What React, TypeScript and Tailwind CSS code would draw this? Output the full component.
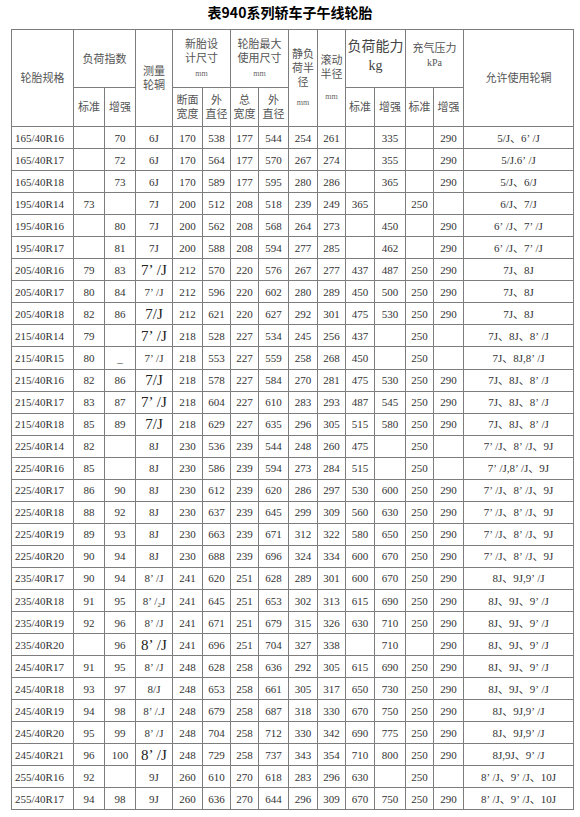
import React from "react";

type Row = {
  spec: string;
  liStd: string;
  liInc: string;
  rim: string;
  big?: boolean;
  secW: string;
  dia: string;
  maxW: string;
  maxD: string;
  staticR: string;
  rollR: string;
  loadStd: string;
  loadInc: string;
  pStd: string;
  pInc: string;
  rims: string;
};

const r = (
  spec: string,
  liStd: string,
  liInc: string,
  rim: string,
  big: boolean,
  secW: string,
  dia: string,
  maxW: string,
  maxD: string,
  staticR: string,
  rollR: string,
  loadStd: string,
  loadInc: string,
  pStd: string,
  pInc: string,
  rims: string
): Row => ({ spec, liStd, liInc, rim, big, secW, dia, maxW, maxD, staticR, rollR, loadStd, loadInc, pStd, pInc, rims });

const rows: Row[] = [
  r("165/40R16", "", "70", "6J", false, "170", "538", "177", "544", "254", "261", "", "335", "", "290", "5/J、6’/J"),
  r("165/40R17", "", "72", "6J", false, "170", "564", "177", "570", "267", "274", "", "355", "", "290", "5/J.6’/J"),
  r("165/40R18", "", "73", "6J", false, "170", "589", "177", "595", "280", "286", "", "365", "", "290", "5/J、6/J"),
  r("195/40R14", "73", "", "7J", false, "200", "512", "208", "518", "239", "249", "365", "", "250", "", "6/J、7/J"),
  r("195/40R16", "", "80", "7J", false, "200", "562", "208", "568", "264", "273", "", "450", "", "290", "6’/J、7’/J"),
  r("195/40R17", "", "81", "7J", false, "200", "588", "208", "594", "277", "285", "", "462", "", "290", "6’/J、7’/J"),
  r("205/40R16", "79", "83", "7’/J", true, "212", "570", "220", "576", "267", "277", "437", "487", "250", "290", "7J、8J"),
  r("205/40R17", "80", "84", "7’/J", false, "212", "596", "220", "602", "280", "289", "450", "500", "250", "290", "7J、8J"),
  r("205/40R18", "82", "86", "7/J", true, "212", "621", "220", "627", "292", "301", "475", "530", "250", "290", "7J、8J"),
  r("215/40R14", "79", "", "7’/J", true, "218", "528", "227", "534", "245", "256", "437", "", "250", "", "7J、8J、8’/J"),
  r("215/40R15", "80", "_", "7’/J", false, "218", "553", "227", "559", "258", "268", "450", "", "250", "", "7J、8J,8’/J"),
  r("215/40R16", "82", "86", "7/J", true, "218", "578", "227", "584", "270", "281", "475", "530", "250", "290", "7J、8J、8’/J"),
  r("215/40R17", "83", "87", "7’/J", true, "218", "604", "227", "610", "283", "293", "487", "545", "250", "290", "7J、8J、8’/J"),
  r("215/40R18", "85", "89", "7/J", true, "218", "629", "227", "635", "296", "305", "515", "580", "250", "290", "7J、8J、8’/J"),
  r("225/40R14", "82", "", "8J", false, "230", "536", "239", "544", "248", "260", "475", "", "250", "", "7’/J、8’/J、9J"),
  r("225/40R16", "85", "", "8J", false, "230", "586", "239", "594", "273", "284", "515", "", "250", "", "7’/J,8’/J、9J"),
  r("225/40R17", "86", "90", "8J", false, "230", "612", "239", "620", "286", "297", "530", "600", "250", "290", "7’/J、8’/J、9J"),
  r("225/40R18", "88", "92", "8J", false, "230", "637", "239", "645", "299", "309", "560", "630", "250", "290", "7’/J、8’/J、9J"),
  r("225/40R19", "89", "93", "8J", false, "230", "663", "239", "671", "312", "322", "580", "650", "250", "290", "7’/J、8’/J、9J"),
  r("225/40R20", "90", "94", "8J", false, "230", "688", "239", "696", "324", "334", "600", "670", "250", "290", "7’/J、8’/J、9J"),
  r("235/40R17", "90", "94", "8’/J", false, "241", "620", "251", "628", "289", "301", "600", "670", "250", "290", "8J、9J,9’/J"),
  r("235/40R18", "91", "95", "8’/₂J", false, "241", "645", "251", "653", "302", "313", "615", "690", "250", "290", "8J、9J、9’/J"),
  r("235/40R19", "92", "96", "8’/J", false, "241", "671", "251", "679", "315", "326", "630", "710", "250", "290", "8J、9J、9’/J"),
  r("235/40R20", "", "96", "8’/J", true, "241", "696", "251", "704", "327", "338", "", "710", "", "290", "8J、9J、9’/J"),
  r("245/40R17", "91", "95", "8’/J", false, "248", "628", "258", "636", "292", "305", "615", "690", "250", "290", "8J、9J、9’/J"),
  r("245/40R18", "93", "97", "8/J", false, "248", "653", "258", "661", "305", "317", "650", "730", "250", "290", "8J、9J、9’/J"),
  r("245/40R19", "94", "98", "8’/.J", false, "248", "679", "258", "687", "318", "330", "670", "750", "250", "290", "8J、9J,9’/J"),
  r("245/40R20", "95", "99", "8’/J", false, "248", "704", "258", "712", "330", "342", "690", "775", "250", "290", "8J、9J,9’/J"),
  r("245/40R21", "96", "100", "8’/J", true, "248", "729", "258", "737", "343", "354", "710", "800", "250", "290", "8J,9J、9’/J"),
  r("255/40R16", "92", "", "9J", false, "260", "610", "270", "618", "283", "296", "630", "", "250", "", "8’/J、9’/J、10J"),
  r("255/40R17", "94", "98", "9J", false, "260", "636", "270", "644", "296", "309", "670", "750", "250", "290", "8’/J、9’/J、10J"),
];

const widths = [62, 31, 31, 37, 30, 28, 28, 30, 29, 28, 29, 31, 28, 30, 110];

const th = "border border-[#7d7d7d] font-normal align-middle text-center p-0";
const td = "border border-[#7d7d7d] text-center p-0 h-[22.06px] text-[11px] leading-[14px]";
const mm = "block text-[8px] leading-[12px] text-[#666]";

// the prime mark in the source is a full-width quote, followed by a little space
function Rim({ text }: { text: string }) {
  const parts = text.split("’");
  return (
    <>
      {parts.map((p, i) => (
        <React.Fragment key={i}>
          {p}
          {i < parts.length - 1 && <span className="inline-block w-[0.55em] text-left">’</span>}
        </React.Fragment>
      ))}
    </>
  );
}

export default function App() {
  return (
    <div className="w-[580px] bg-white text-[#333] font-['Liberation_Serif','Noto_Sans_CJK_SC',serif]">
      <h1 className="pt-[3px] h-[29px] text-center text-[14px] leading-[18px] font-bold text-black font-['Noto_Sans_CJK_SC',sans-serif]">
        表940系列轿车子午线轮胎
      </h1>
      <div className="pl-[11px]">
        <table className="w-[562px] table-fixed border-collapse border border-[#555]">
          <colgroup>
            {widths.map((w, i) => (
              <col key={i} style={{ width: w }} />
            ))}
          </colgroup>
          <thead className="text-[11px] leading-[14px] text-[#555]">
            <tr className="h-[58px]">
              <th rowSpan={2} className={th}>轮胎规格</th>
              <th colSpan={2} className={th}>负荷指数</th>
              <th rowSpan={2} className={th}>
                测量
                <br />
                轮辋
              </th>
              <th colSpan={2} className={th}>
                新胎设
                <br />
                计尺寸
                <span className={mm + " mt-[3px]"}>mm</span>
              </th>
              <th colSpan={2} className={th}>
                轮胎最大
                <br />
                使用尺寸
                <span className={mm + " mt-[3px]"}>mm</span>
              </th>
              <th rowSpan={2} className={th}>
                静负
                <br />
                荷半
                <br />
                径<span className={mm + " mt-[8px]"}>mm</span>
              </th>
              <th rowSpan={2} className={th}>
                滚动
                <br />
                半径<span className={mm + " mt-[10px]"}>mm</span>
              </th>
              <th colSpan={2} className={th + " text-[14px] leading-[19px] pb-[6px] text-[#444]"}>
                负荷能力
                <br />
                kg
              </th>
              <th colSpan={2} className={th + " pb-[6px]"}>
                充气压力
                <br />
                <span className="text-[10px]">kPa</span>
              </th>
              <th rowSpan={2} className={th}>允许使用轮辋</th>
            </tr>
            <tr className="h-[39px]">
              <th className={th}>标准</th>
              <th className={th}>增强</th>
              <th className={th}>
                断面
                <br />
                宽度
              </th>
              <th className={th}>
                外
                <br />
                直径
              </th>
              <th className={th}>
                总
                <br />
                宽度
              </th>
              <th className={th}>
                外
                <br />
                直径
              </th>
              <th className={th}>标准</th>
              <th className={th}>增强</th>
              <th className={th}>标准</th>
              <th className={th}>增强</th>
            </tr>
          </thead>
          <tbody>
            {rows.map((row) => (
              <tr key={row.spec}>
                <td className={td + " text-left pl-[3px]"}>{row.spec}</td>
                <td className={td}>{row.liStd}</td>
                <td className={td}>{row.liInc}</td>
                <td className={td + (row.big ? " text-[15px] leading-[16px] text-[#222]" : "")}>
                  <Rim text={row.rim} />
                </td>
                <td className={td}>{row.secW}</td>
                <td className={td}>{row.dia}</td>
                <td className={td}>{row.maxW}</td>
                <td className={td}>{row.maxD}</td>
                <td className={td}>{row.staticR}</td>
                <td className={td}>{row.rollR}</td>
                <td className={td}>{row.loadStd}</td>
                <td className={td}>{row.loadInc}</td>
                <td className={td}>{row.pStd}</td>
                <td className={td}>{row.pInc}</td>
                <td className={td}>
                  <Rim text={row.rims} />
                </td>
              </tr>
            ))}
          </tbody>
        </table>
      </div>
    </div>
  );
}
